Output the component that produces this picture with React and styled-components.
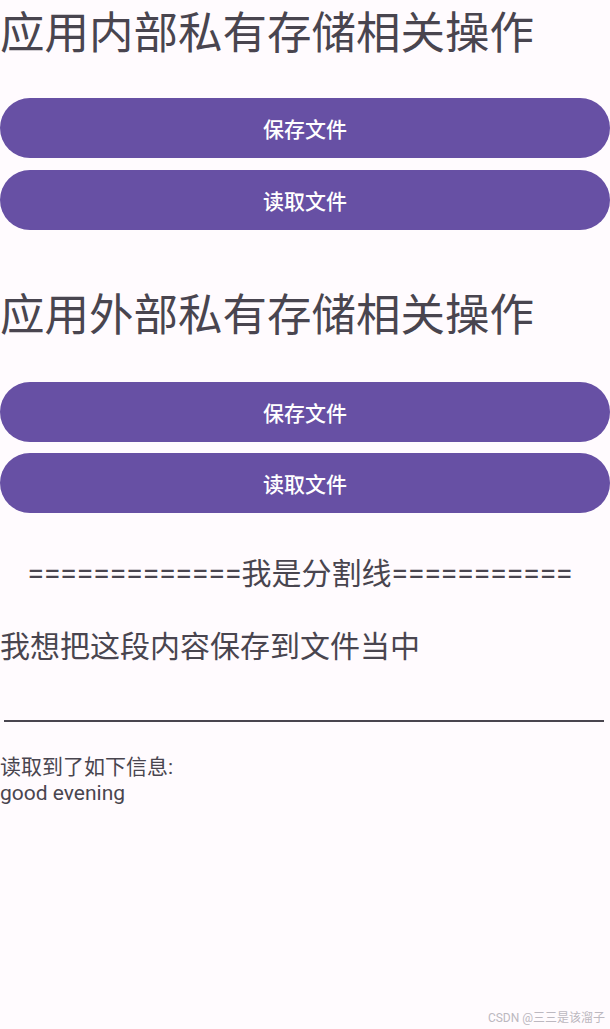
import React from 'react';
import styled, { createGlobalStyle } from 'styled-components';

const GlobalStyle = createGlobalStyle`
	html, body {
		margin: 0;
		padding: 0;
		background: #fffbfe;
	}
	body {
		font-family: Roboto, "Noto Sans CJK SC", sans-serif;
		color: #49454f;
	}
`;

const Screen = styled.div`
	position: relative;
	width: 610px;
	height: 1029px;
	overflow: hidden;
	background: #fffbfe;
	display: flex;
	flex-direction: column;
`;

const Title = styled.h1`
	margin: ${props => props.$top}px 0 0;
	font-size: 44.5px;
	font-weight: 400;
	line-height: 68px;
	white-space: nowrap;
	color: #49454f;
`;

const ButtonGroup = styled.div`
	display: flex;
	flex-direction: column;
	gap: ${props => props.$gap}px;
	margin-top: ${props => props.$top}px;
`;

const PillButton = styled.button`
	height: 60px;
	width: 100%;
	border: none;
	border-radius: 30px;
	background: #6750a4;
	color: #ffffff;
	font-family: Roboto, "Noto Sans CJK SC", sans-serif;
	font-size: 21px;
	font-weight: 500;
	cursor: pointer;
`;

const Divider = styled.div`
	margin-top: 41px;
	padding-right: 10px;
	text-align: center;
	font-size: 30px;
	line-height: 40px;
	white-space: nowrap;
`;

const Field = styled.div`
	margin-top: 33px;
	display: flex;
	flex-direction: column;
`;

const FieldText = styled.div`
	font-size: 30px;
	line-height: 40px;
	white-space: nowrap;
`;

const Underline = styled.div`
	margin: 53px 6px 0 4px;
	height: 2px;
	background: #49454f;
`;

const Output = styled.div`
	margin-top: 32px;
	font-size: 21px;
	line-height: 26px;
`;

const Watermark = styled.div`
	position: absolute;
	right: 5px;
	bottom: 4px;
	font-size: 12px;
	color: #bcb8c0;
`;

const Section = ({ title, top, gap, buttonsTop }) => (
	<>
		<Title $top={top}>{title}</Title>
		<ButtonGroup $top={buttonsTop} $gap={gap}>
			<PillButton>保存文件</PillButton>
			<PillButton>读取文件</PillButton>
		</ButtonGroup>
	</>
);

export default function App() {
	return (
		<Screen>
			<GlobalStyle />
			<Section title="应用内部私有存储相关操作" top={0} buttonsTop={30} gap={12} />
			<Section title="应用外部私有存储相关操作" top={52} buttonsTop={32} gap={11} />
			<Divider>=============我是分割线===========</Divider>
			<Field>
				<FieldText>我想把这段内容保存到文件当中</FieldText>
				<Underline />
			</Field>
			<Output>
				<div>读取到了如下信息:</div>
				<div>good evening</div>
			</Output>
			<Watermark>CSDN @三三是该溜子</Watermark>
		</Screen>
	);
}
